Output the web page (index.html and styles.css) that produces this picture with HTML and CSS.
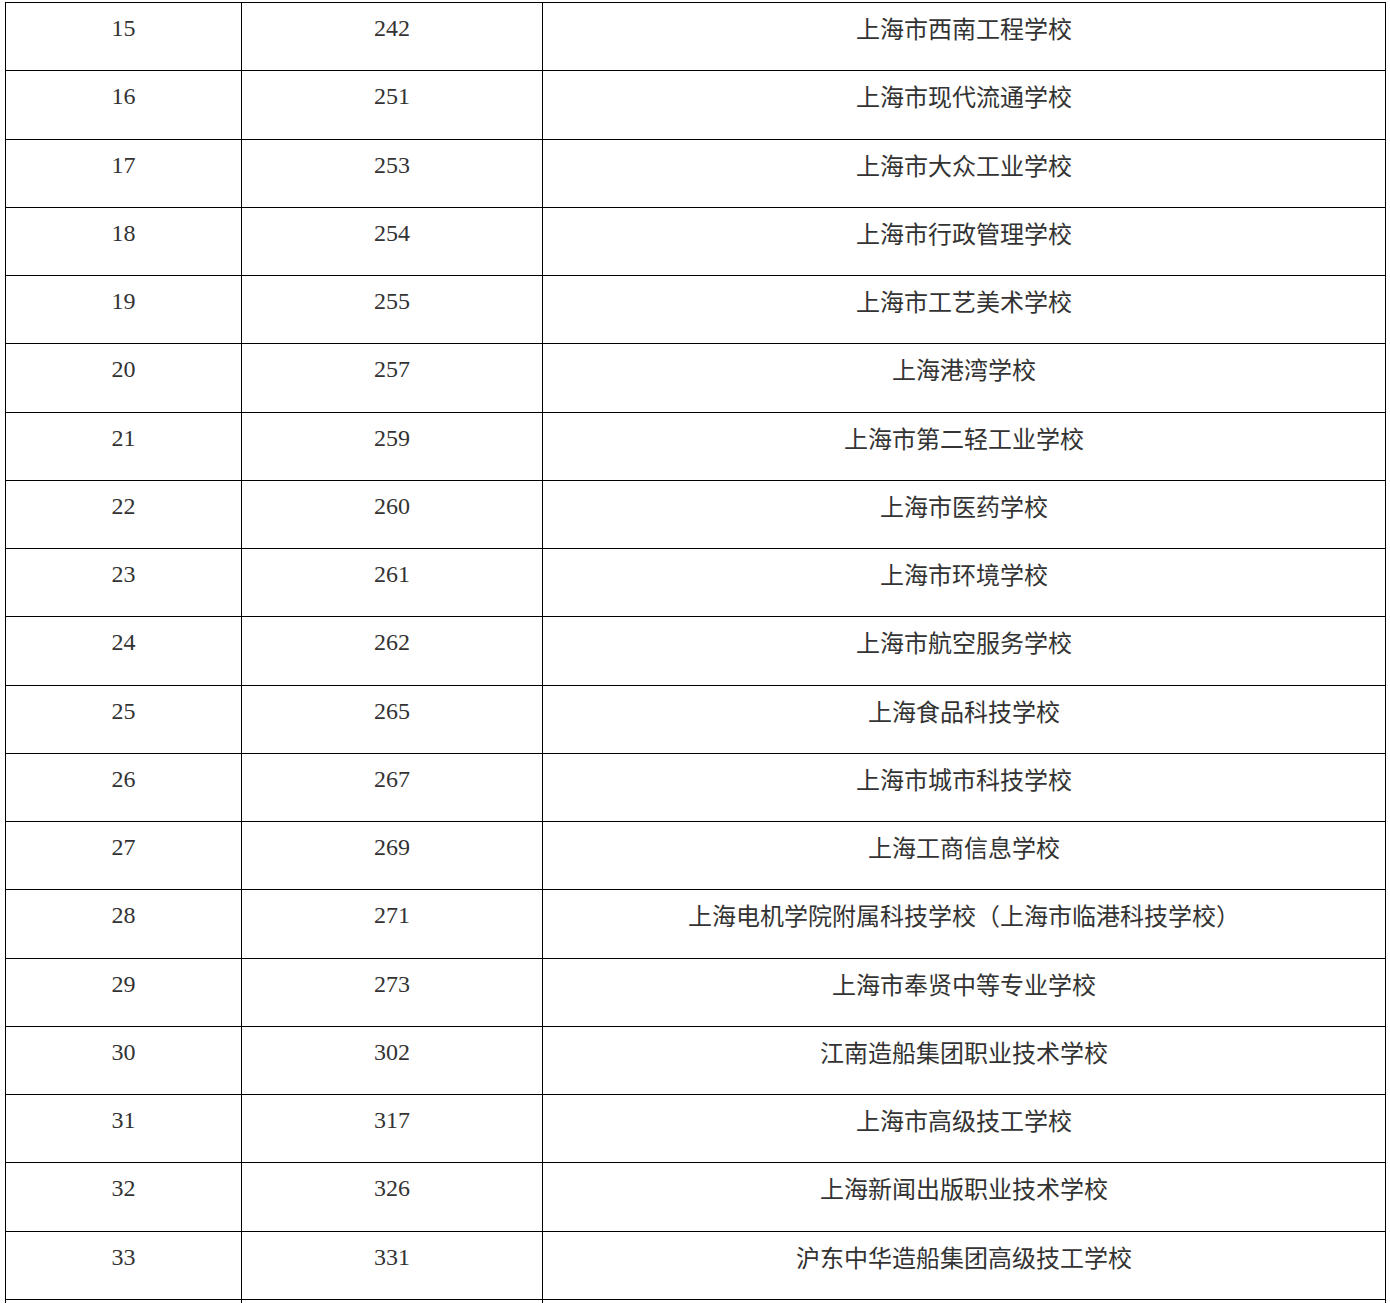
FILE: index.html
```html
<!DOCTYPE html>
<html lang="zh-CN">
<head>
<meta charset="utf-8">
<title>学校名单</title>
<link rel="stylesheet" href="styles.css">
</head>
<body>
<div class="wrap">
<table class="list">
<colgroup><col class="c1"><col class="c2"><col class="c3"></colgroup>
<tbody>
<tr><td class="num">15</td><td class="num">242</td><td class="name">上海市西南工程学校</td></tr>
<tr><td class="num">16</td><td class="num">251</td><td class="name">上海市现代流通学校</td></tr>
<tr><td class="num">17</td><td class="num">253</td><td class="name">上海市大众工业学校</td></tr>
<tr><td class="num">18</td><td class="num">254</td><td class="name">上海市行政管理学校</td></tr>
<tr><td class="num">19</td><td class="num">255</td><td class="name">上海市工艺美术学校</td></tr>
<tr><td class="num">20</td><td class="num">257</td><td class="name">上海港湾学校</td></tr>
<tr><td class="num">21</td><td class="num">259</td><td class="name">上海市第二轻工业学校</td></tr>
<tr><td class="num">22</td><td class="num">260</td><td class="name">上海市医药学校</td></tr>
<tr><td class="num">23</td><td class="num">261</td><td class="name">上海市环境学校</td></tr>
<tr><td class="num">24</td><td class="num">262</td><td class="name">上海市航空服务学校</td></tr>
<tr><td class="num">25</td><td class="num">265</td><td class="name">上海食品科技学校</td></tr>
<tr><td class="num">26</td><td class="num">267</td><td class="name">上海市城市科技学校</td></tr>
<tr><td class="num">27</td><td class="num">269</td><td class="name">上海工商信息学校</td></tr>
<tr><td class="num">28</td><td class="num">271</td><td class="name">上海电机学院附属科技学校（上海市临港科技学校）</td></tr>
<tr><td class="num">29</td><td class="num">273</td><td class="name">上海市奉贤中等专业学校</td></tr>
<tr><td class="num">30</td><td class="num">302</td><td class="name">江南造船集团职业技术学校</td></tr>
<tr><td class="num">31</td><td class="num">317</td><td class="name">上海市高级技工学校</td></tr>
<tr><td class="num">32</td><td class="num">326</td><td class="name">上海新闻出版职业技术学校</td></tr>
<tr><td class="num">33</td><td class="num">331</td><td class="name">沪东中华造船集团高级技工学校</td></tr>
<tr><td class="num"></td><td class="num"></td><td class="name"></td></tr>
</tbody>
</table>
</div>
</body>
</html>
```

FILE: styles.css
```css
html, body {
  margin: 0;
  padding: 0;
  background: #fff;
}
.wrap {
  padding: 2px 0 0 5px;
  height: 1303px;
  overflow: hidden;
  box-sizing: border-box;
}
.list {
  border-collapse: collapse;
  table-layout: fixed;
  width: 1381px;
  border: 1px solid #000;
}
.c1 { width: 236px; }
.c2 { width: 301px; }
.c3 { width: 843px; }
.list td {
  border: 1px solid #000;
  height: 68.26px;
  box-sizing: border-box;
  padding: 7px 0 0 0;
  vertical-align: top;
  text-align: center;
  line-height: 36px;
  font-size: 24px;
  color: #333;
}
.num {
  font-family: "Liberation Serif", "Times New Roman", serif;
}
.name {
  font-family: "Noto Sans CJK SC", "Microsoft YaHei", sans-serif;
  color: #333;
}
```
